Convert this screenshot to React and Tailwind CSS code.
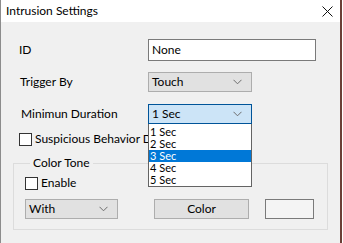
import React from "react";

const font = "font-['Lato','Segoe_UI',sans-serif]";

function Chevron() {
  return (
    <svg width="9" height="6" viewBox="0 0 9 6" className="shrink-0">
      <path d="M0.5 0.8 L4.5 4.8 L8.5 0.8" fill="none" stroke="#6d6d6d" strokeWidth="1" />
    </svg>
  );
}

function Select({ value, className = "", focused }) {
  return (
    <div
      className={
        "h-[20px] flex items-center justify-between pl-[3px] pr-[9px] border text-[12px] text-black " +
        (focused ? "bg-[#cce4f7] border-[#005499] " : "bg-[#e1e1e1] border-[#adadad] ") +
        className
      }
    >
      <span>{value}</span>
      <Chevron />
    </div>
  );
}

function Check({ label, clip }) {
  return (
    <div className="flex items-center gap-[3px]">
      <div className="w-[13px] h-[13px] shrink-0 bg-white border border-[#333333]" />
      <span
        className={
          "text-[12px] text-black leading-[14px] whitespace-nowrap " +
          (clip ? "w-[113px] overflow-hidden" : "")
        }
      >
        {label}
      </span>
    </div>
  );
}

export default function App() {
  const items = ["1 Sec", "2 Sec", "3 Sec", "4 Sec", "5 Sec"];
  return (
    <div className={"w-[343px] h-[243px] relative overflow-hidden bg-white " + font}>
      <div className="h-full flex flex-col border-l border-[#8c8c8c] border-r-2 border-r-[#6b3f36] mr-[1px]">
        <div className="h-[22px] bg-white flex items-center justify-between pl-[5px] pr-[7px]">
          <span className="text-[12px] text-black">Intrusion Settings</span>
          <svg width="11" height="11" viewBox="0 0 11 11">
            <path d="M0.5 0.5 L10.5 10.5 M10.5 0.5 L0.5 10.5" stroke="#111" strokeWidth="1" />
          </svg>
        </div>
        <div className="flex-1 bg-[#f0f0f0] flex flex-col pt-[17px] text-[12px] text-black">
          <div className="flex items-center h-[22px]">
            <span className="w-[147px] pl-[18px]">ID</span>
            <div className="w-[168px] h-[22px] bg-white border border-[#7a7a7a] flex items-center pl-[3px]">
              None
            </div>
          </div>
          <div className="flex items-center h-[20px] mt-[11px]">
            <span className="w-[147px] pl-[19px]">Trigger By</span>
            <Select value="Touch" className="w-[104px]" />
          </div>
          <div className="flex items-center h-[20px] mt-[12px]">
            <span className="w-[147px] pl-[20px]">Minimun Duration</span>
            <Select value="1 Sec" className="w-[104px]" focused />
          </div>
          <div className="mt-[8px] pl-[18px]">
            <Check label="Suspicious Behavior Detection" clip />
          </div>
          <fieldset className="mx-[12px] mt-[10px] border border-[#dcdcdc] pl-[11px] pr-[13px] pb-[10px]">
            <legend className="ml-[5px] px-[3px] text-[12px] leading-[14px]">Color Tone</legend>
            <div className="mt-[6px]">
              <Check label="Enable" />
            </div>
            <div className="flex items-center mt-[9px]">
              <Select value="With" className="w-[93px]" />
              <div className="ml-[36px] w-[95px] h-[20px] bg-[#e1e1e1] border border-[#adadad] flex items-center justify-center">
                Color
              </div>
              <div className="ml-[16px] w-[49px] h-[20px] bg-[#f4f4f4] border border-[#7a7a7a]" />
            </div>
          </fieldset>
        </div>
      </div>
      <div className="absolute left-[148px] top-[124px] w-[104px] bg-white border border-[#646464] border-t-0 text-[11px] text-black pt-[2px]">
        {items.map((it) => (
          <div
            key={it}
            className={
              "h-[12px] leading-[12px] pl-[1px] " +
              (it === "3 Sec" ? "bg-[#0078d7] text-white" : "")
            }
          >
            {it}
          </div>
        ))}
      </div>
    </div>
  );
}
